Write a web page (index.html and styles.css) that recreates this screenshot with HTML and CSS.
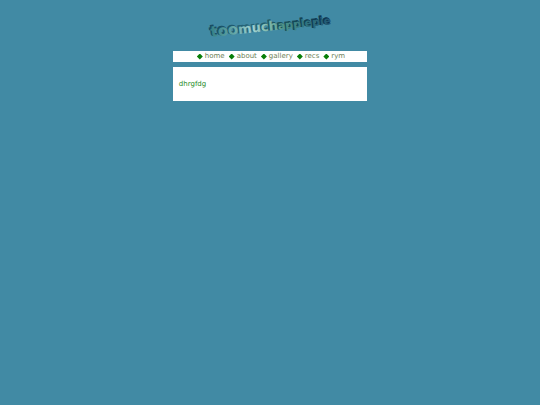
FILE: index.html
```
<!DOCTYPE html>
<html lang="en">
<head>
<meta charset="utf-8">
<title>toomuchapplepie</title>
<link rel="stylesheet" href="styles.css">
</head>
<body>
<header class="banner">
<svg class="logo" viewBox="0 0 130 36" role="img" aria-label="toomuchapplepie">
<defs>
<linearGradient id="face" gradientUnits="userSpaceOnUse" x1="5" y1="0" x2="124" y2="0">
<stop offset="0" stop-color="#347f84"/>
<stop offset=".2" stop-color="#62a5a5"/>
<stop offset=".36" stop-color="#a0d1d1"/>
<stop offset=".5" stop-color="#80b9aa"/>
<stop offset=".62" stop-color="#509488"/>
<stop offset=".82" stop-color="#307480"/>
<stop offset="1" stop-color="#235a74"/>
</linearGradient>
<linearGradient id="edge" gradientUnits="userSpaceOnUse" x1="5" y1="0" x2="124" y2="0">
<stop offset="0" stop-color="#144a60"/>
<stop offset=".35" stop-color="#27667a"/>
<stop offset=".6" stop-color="#174f58"/>
<stop offset="1" stop-color="#0b3350"/>
</linearGradient>
</defs>
<g transform="rotate(-6 5 31)">
<text class="logo-edge" x="5" y="30"><tspan class="big">too</tspan><tspan class="mid">much</tspan><tspan class="small">applepie</tspan></text>
<text class="logo-face" x="6" y="31"><tspan class="big">too</tspan><tspan class="mid">much</tspan><tspan class="small">applepie</tspan></text>
</g>
</svg>
</header>
<div class="page">
<nav class="panel menu">
<a href="#home">home</a>
<a href="#about">about</a>
<a href="#gallery">gallery</a>
<a href="#recs">recs</a>
<a href="#rym">rym</a>
</nav>
<main class="panel content">
<p>dhrgfdg</p>
</main>
</div>
</body>
</html>
```
FILE: styles.css
```
body {
  margin: 0;
  background: #418aa4;
  color: #1f8b1f;
  font: 7px/11px "DejaVu Sans", sans-serif;
}

.banner {
  display: flex;
  justify-content: center;
  padding: 6px 0 9px;
}

.logo {
  display: block;
  width: 130px;
  height: 36px;
}

.logo text {
  font-family: "DejaVu Sans", sans-serif;
  font-weight: bold;
}

.logo-edge {
  fill: url(#edge);
  stroke: url(#edge);
  stroke-width: 1px;
}

.logo-face {
  fill: url(#face);
}

.big {
  font-size: 15px;
}

.mid {
  font-size: 13px;
}

.small {
  font-size: 11px;
}

.page {
  display: flex;
  flex-direction: column;
  gap: 5px;
  width: 36%;
  margin: 0 auto;
}

.panel {
  background: #fff;
}

.menu {
  display: flex;
  justify-content: center;
  gap: 4px;
  padding-left: 2px;
}

.menu a {
  display: flex;
  align-items: center;
  gap: 2px;
  color: #6d7f57;
  text-decoration: none;
}

.menu a::before {
  content: "";
  width: 6px;
  height: 6px;
  background: #087f08;
  clip-path: polygon(50% 0, 100% 50%, 50% 100%, 0 50%);
}

.content {
  padding: 12px 6px 11px;
}

.content p {
  margin: 0;
}
```
